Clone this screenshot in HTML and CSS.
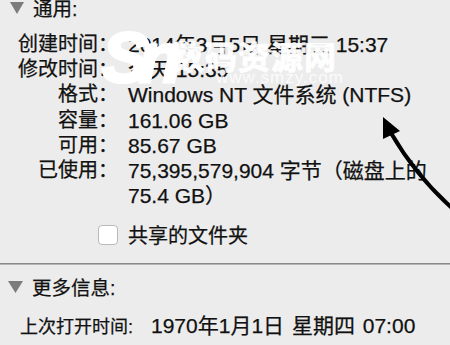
FILE: index.html
```html
<!DOCTYPE html>
<html lang="zh-CN">
<head>
<meta charset="utf-8">
<link rel="stylesheet" href="styles.css">
</head>
<body>
<div class="page">
  <div class="section-head first">
    <svg class="tri" width="14" height="12" viewBox="0 0 14 12"><path d="M0 0 H14 L7 12 Z" fill="#7c7c7c"/></svg>
    <span>通用:</span>
  </div>
  <div class="info">
    <span class="label">创建时间：</span><span class="value">2014年3月5日 星期三 15:37</span>
    <span class="label">修改时间：</span><span class="value">今天 15:35</span>
    <span class="label">格式：</span><span class="value">Windows NT 文件系统 (NTFS)</span>
    <span class="label">容量：</span><span class="value">161.06 GB</span>
    <span class="label">可用：</span><span class="value">85.67 GB</span>
    <span class="label">已使用：</span><span class="value">75,395,579,904 字节（磁盘上的<br>75.4 GB）</span>
  </div>
  <div class="share">
    <span class="box"></span><span class="value">共享的文件夹</span>
  </div>
  <div class="divider"></div>
  <div class="section-head second">
    <svg class="tri" width="15" height="12" viewBox="0 0 15 12"><path d="M0 0 H15 L7.5 12 Z" fill="#7c7c7c"/></svg>
    <span>更多信息:</span>
  </div>
  <div class="last">
    <span class="last-label">上次打开时间:</span>
    <span class="last-value">1970年1月1日 星期四 07:00</span>
  </div>

  <div class="watermark">
    <span class="wm-logo">Sn</span>
    <span class="wm-name">数码资源网</span>
    <span class="wm-url">www.smzy.com</span>
  </div>
  <svg class="arrow" width="90" height="110" viewBox="0 0 90 110">
    <path d="M92 98 Q55 65 30 22" fill="none" stroke="#000" stroke-width="4" stroke-linecap="round"/>
    <path d="M22 6 L22 28 L39 20 Z" fill="#000"/>
  </svg>
</div>
</body>
</html>
```
FILE: styles.css
```css
html, body {
  margin: 0;
  padding: 0;
  background: #ececec;
}
.page {
  position: relative;
  width: 450px;
  height: 345px;
  overflow: hidden;
  font-family: "Liberation Sans", "Noto Sans CJK SC", sans-serif;
  color: #111;
  -webkit-text-stroke: 0.25px #111;
}
.section-head {
  display: flex;
  align-items: center;
  height: 25px;
  font-size: 19.5px;
}
.section-head .tri {
  margin-right: 9px;
}
.section-head.first {
  margin-top: -5px;
  padding-left: 10px;
}
.section-head.second {
  margin-top: 9px;
  padding-left: 8px;
}
.info {
  margin-top: 12px;
  display: grid;
  grid-template-columns: 118px 1fr;
  column-gap: 10px;
  line-height: 25.2px;
}
.label {
  text-align: right;
  font-size: 20px;
  white-space: nowrap;
}
.value {
  font-size: 21px;
  white-space: nowrap;
}
.share {
  margin-top: 12px;
  display: grid;
  grid-template-columns: 118px 1fr;
  column-gap: 10px;
  align-items: center;
  height: 25px;
}
.share .value {
  font-size: 20px;
}
.box {
  justify-self: end;
  width: 18px;
  height: 18px;
  border: 1px solid #b9b9b9;
  border-radius: 4px;
  background: #fff;
  -webkit-text-stroke: 0;
}
.divider {
  margin-top: 18px;
  height: 1px;
  background: #8a8a8a;
  border-bottom: 1px solid #b5b5b5;
}
.last {
  margin-top: 14px;
  padding-left: 20px;
  display: flex;
  align-items: baseline;
  gap: 18px;
  line-height: 25px;
  white-space: nowrap;
}
.last-label {
  font-size: 18px;
}
.last-value {
  font-size: 21px;
  word-spacing: 2px;
}
.watermark {
  position: absolute;
  left: 100px;
  top: 26px;
  width: 250px;
  height: 70px;
  color: #fff;
  -webkit-text-stroke: 0;
  pointer-events: none;
}
.wm-logo {
  position: absolute;
  left: 2px;
  top: -8px;
  font-size: 70px;
  font-weight: bold;
  font-style: italic;
  letter-spacing: -10px;
  -webkit-text-stroke: 3px #fff;
}
.wm-name {
  position: absolute;
  left: 72px;
  top: 6px;
  font-size: 32px;
  font-weight: bold;
  letter-spacing: 1px;
  -webkit-text-stroke: 1px #fff;
  opacity: 0.95;
}
.wm-url {
  position: absolute;
  left: 116px;
  top: 42px;
  font-size: 17px;
  opacity: 0.8;
  letter-spacing: 1px;
}
.arrow {
  position: absolute;
  left: 361px;
  top: 111px;
}
```
